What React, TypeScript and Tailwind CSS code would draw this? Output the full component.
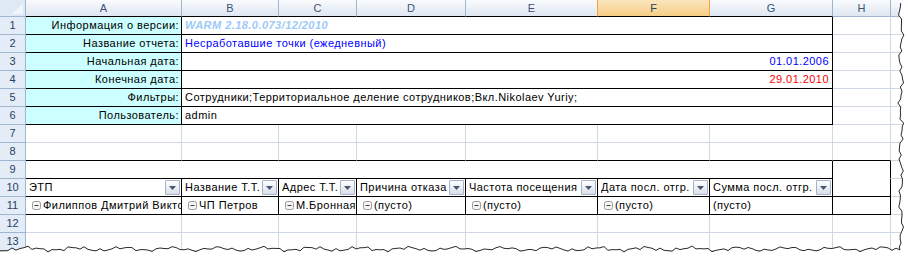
import React from 'react';

// Column widths of the sheet (row header, A..H, then the cut-off column I)
const cols = 'grid-cols-[26px_156px_97px_78px_109px_132px_112px_123px_58px_1fr]';

const GR = 'border-r-[#d0d7e5]';
const GB = 'border-b-[#d0d7e5]';
const BR = 'border-r-black';
const BB = 'border-b-black';

type CellProps = {
  span?: string;
  r?: string;
  b?: string;
  className?: string;
  children?: React.ReactNode;
};

const Cell: React.FC<CellProps> = ({ span = '', r = GR, b = GB, className = '', children }) => (
  <div className={`h-[18px] border-r border-b ${r} ${b} ${span} flex items-center overflow-hidden whitespace-nowrap ${className}`}>
    {children}
  </div>
);

const RowHead: React.FC<{ n: number }> = ({ n }) => (
  <div className="h-[18px] border-r border-b border-r-[#9eb6ce] border-b-[#9eb6ce] bg-[#e4ecf7] flex items-center justify-center text-[#27415f] tracking-normal">
    {n}
  </div>
);

const ColHead: React.FC<{ label: string; r?: string; b?: string; active?: boolean }> = ({
  label,
  r = 'border-r-[#9eb6ce]',
  b = 'border-b-black',
  active,
}) => (
  <div
    className={`h-[17px] border-r border-b ${r} ${b} flex items-center justify-center tracking-normal ${
      active ? 'bg-gradient-to-b from-[#fbe6bd] to-[#f6cd84] text-[#27415f]' : 'bg-gradient-to-b from-[#f9fbfd] to-[#dfe7f2] text-[#3d5273]'
    }`}
  >
    {label}
  </div>
);

// Small filter drop-down button of the pivot table
const FilterBtn = () => (
  <div className="ml-auto mr-[1px] w-[15px] h-[15px] shrink-0 border border-[#a3b3c8] rounded-[1px] bg-gradient-to-b from-[#fdfdfe] to-[#d9e0ea] flex items-center justify-center">
    <svg width="7" height="4" viewBox="0 0 7 4">
      <path d="M0 0 L7 0 L3.5 4 Z" fill="#46566d" />
    </svg>
  </div>
);

const FilterCell: React.FC<{ label: string }> = ({ label }) => (
  <Cell r={BR} b={BB} className="pl-[3px] text-black">
    <span className="overflow-hidden">{label}</span>
    <FilterBtn />
  </Cell>
);

// Boxed minus (collapse) icon
const Collapse = () => (
  <svg width="9" height="9" viewBox="0 0 9 9" className="shrink-0 mr-[2px]">
    <rect x="0.5" y="0.5" width="8" height="8" rx="2" fill="#f4f4f4" stroke="#9a9a9a" />
    <path d="M2.5 4.5 H6.5" stroke="#444" />
  </svg>
);

const ItemCell: React.FC<{ label: string; icon?: boolean }> = ({ label, icon = true }) => (
  <Cell r={BR} b={BB} className={icon ? 'pl-[6px]' : 'pl-[3px]'}>
    {icon && <Collapse />}
    <span className="min-w-0 overflow-hidden">{label}</span>
  </Cell>
);

// Torn paper edge along the bottom and the right side
const noise = (i: number) =>
  Math.sin(i * 1.7) * 1.1 + Math.sin(i * 0.53 + 1) * 1.4 + Math.sin(i * 3.1 + 2) * 0.7;

const edge = (() => {
  const pts: string[] = [];
  for (let x = 0; x <= 900; x += 4) pts.push(`${x},${(249 + noise(x / 4)).toFixed(1)}`);
  for (let y = 247; y >= 0; y -= 4) pts.push(`${(901 + noise(y / 4 + 40)).toFixed(1)},${y}`);
  return pts;
})();

const TornEdge = () => (
  <svg className="absolute inset-0 pointer-events-none" width="908" height="257" viewBox="0 0 908 257">
    <path d={`M${edge.join(' L')} L908,0 L908,257 L0,257 Z`} fill="#ffffff" />
    <path d={`M${edge.join(' L')}`} fill="none" stroke="#2a2a2a" strokeWidth="1" />
  </svg>
);

const labels = ['Информация о версии:', 'Название отчета:', 'Начальная дата:', 'Конечная дата:', 'Фильтры:', 'Пользователь:'];

const App: React.FC = () => {
  const info: React.ReactNode[] = [
    <span className="pl-[3px] italic font-bold text-[#9ccaf7]">WARM 2.18.0.073/12/2010</span>,
    <span className="pl-[3px] text-[#0000ff]">Несработавшие точки (ежедневный)</span>,
    <span className="ml-auto pr-[3px] text-[#0000ff]">01.01.2006</span>,
    <span className="ml-auto pr-[3px] text-[#ff0000]">29.01.2010</span>,
    <span className="pl-[3px] text-black">Сотрудники;Территориальное деление сотрудников;Вкл.Nikolaev Yuriy;</span>,
    <span className="pl-[3px] text-black">admin</span>,
  ];

  return (
    <div className="relative w-[908px] h-[257px] bg-white overflow-hidden font-['Liberation_Sans',Arial,sans-serif] text-[11px] leading-none tracking-[0.45px]">
      <div className={`grid ${cols}`}>
        {/* Column headers */}
        <div className="h-[17px] border-r border-b border-r-[#9eb6ce] border-b-[#9eb6ce] bg-[#dfe8f5] relative">
          <svg className="absolute right-[2px] bottom-[2px]" width="11" height="11" viewBox="0 0 11 11">
            <path d="M11 0 L11 11 L0 11 Z" fill="#f2f6fb" />
          </svg>
        </div>
        <ColHead label="A" />
        <ColHead label="B" />
        <ColHead label="C" />
        <ColHead label="D" />
        <ColHead label="E" r="border-r-[#f0a340]" />
        <ColHead label="F" r="border-r-[#f0a340]" active />
        <ColHead label="G" />
        <ColHead label="H" b="border-b-[#9eb6ce]" />
        <ColHead label="" r="border-r-transparent" b="border-b-[#9eb6ce]" />

        {/* Rows 1-6: report info block */}
        {labels.map((label, i) => (
          <React.Fragment key={label}>
            <RowHead n={i + 1} />
            <Cell r={BR} b={BB} className="bg-[#ccffff] justify-end pr-[2px] text-black">
              {label}
            </Cell>
            <Cell span="col-span-6" r={BR} b={BB}>
              {info[i]}
            </Cell>
            <Cell />
            <Cell r="border-r-transparent" />
          </React.Fragment>
        ))}

        {/* Rows 7-8: empty */}
        <RowHead n={7} />
        {[0, 1, 2, 3, 4, 5, 6, 7].map((c) => (
          <Cell key={`r7-${c}`} />
        ))}
        <Cell r="border-r-transparent" />
        <RowHead n={8} />
        {[0, 1, 2, 3, 4, 5, 6, 7].map((c) => (
          <Cell key={`r8-${c}`} b={BB} />
        ))}
        <Cell r="border-r-transparent" />

        {/* Row 9: empty merged */}
        <RowHead n={9} />
        <Cell span="col-span-7" r={BR} b={BB} />
        <Cell r={BR} b="border-b-white" />
        <Cell r="border-r-transparent" />

        {/* Row 10: pivot filter headers */}
        <RowHead n={10} />
        <FilterCell label="ЭТП" />
        <FilterCell label="Название Т.Т." />
        <FilterCell label="Адрес Т.Т." />
        <FilterCell label="Причина отказа" />
        <FilterCell label="Частота посещения" />
        <FilterCell label="Дата посл. отгр." />
        <FilterCell label="Сумма посл. отгр." />
        <Cell r={BR} b={BB} />
        <Cell r="border-r-transparent" />

        {/* Row 11: pivot items */}
        <RowHead n={11} />
        <ItemCell label="Филиппов Дмитрий Викторович" />
        <ItemCell label="ЧП Петров" />
        <ItemCell label="М.Бронная" />
        <ItemCell label="(пусто)" />
        <ItemCell label="(пусто)" />
        <ItemCell label="(пусто)" />
        <ItemCell label="(пусто)" icon={false} />
        <Cell r={BR} b={BB} />
        <Cell r="border-r-transparent" />

        {/* Rows 12-13: empty */}
        {[12, 13].map((n) => (
          <React.Fragment key={n}>
            <RowHead n={n} />
            {[0, 1, 2, 3, 4, 5, 6, 7].map((c) => (
              <Cell key={`r${n}-${c}`} />
            ))}
            <Cell r="border-r-transparent" />
          </React.Fragment>
        ))}
      </div>
      <TornEdge />
    </div>
  );
};

export default App;
